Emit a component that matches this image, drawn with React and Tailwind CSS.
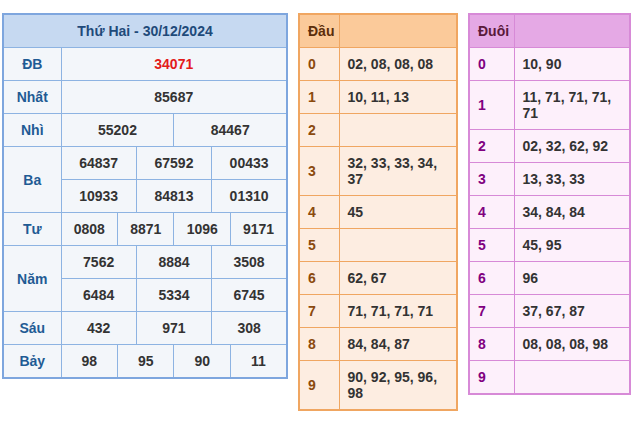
const FONT = "font-['Liberation_Sans',Arial,sans-serif]";

const BLUE_TD = "border border-[#8db3e2] bg-[#f3f6fa] py-2 leading-4 text-center text-[#333]";
const BLUE_LABEL = "border border-[#8db3e2] bg-[#f3f6fa] py-2 leading-4 text-center text-[#1f5b94]";

function Cells({ values, span }) {
  return values.map((v, i) => (
    <td key={i} colSpan={span} className={BLUE_TD}>
      {v}
    </td>
  ));
}

function ResultTable() {
  return (
    <table className="w-[286px] table-fixed border-collapse border-2 border-[#7ea6de] text-[14px] font-bold">
      <colgroup>
        <col className="w-[58px]" />
        {Array.from({ length: 12 }).map((_, i) => (
          <col key={i} />
        ))}
      </colgroup>
      <tbody>
        <tr>
          <th colSpan={13} className="border border-[#8db3e2] bg-[#c6d9f1] py-2 leading-4 text-center text-[#1f4a7a]">
            Thứ Hai - 30/12/2024
          </th>
        </tr>
        <tr>
          <td className={BLUE_LABEL}>ĐB</td>
          <td colSpan={12} className="border border-[#8db3e2] bg-[#f3f6fa] py-2 leading-4 text-center text-[#e31b1b]">
            34071
          </td>
        </tr>
        <tr>
          <td className={BLUE_LABEL}>Nhất</td>
          <Cells values={["85687"]} span={12} />
        </tr>
        <tr>
          <td className={BLUE_LABEL}>Nhì</td>
          <Cells values={["55202", "84467"]} span={6} />
        </tr>
        <tr>
          <td rowSpan={2} className={BLUE_LABEL}>Ba</td>
          <Cells values={["64837", "67592", "00433"]} span={4} />
        </tr>
        <tr>
          <Cells values={["10933", "84813", "01310"]} span={4} />
        </tr>
        <tr>
          <td className={BLUE_LABEL}>Tư</td>
          <Cells values={["0808", "8871", "1096", "9171"]} span={3} />
        </tr>
        <tr>
          <td rowSpan={2} className={BLUE_LABEL}>Năm</td>
          <Cells values={["7562", "8884", "3508"]} span={4} />
        </tr>
        <tr>
          <Cells values={["6484", "5334", "6745"]} span={4} />
        </tr>
        <tr>
          <td className={BLUE_LABEL}>Sáu</td>
          <Cells values={["432", "971", "308"]} span={4} />
        </tr>
        <tr>
          <td className={BLUE_LABEL}>Bảy</td>
          <Cells values={["98", "95", "90", "11"]} span={3} />
        </tr>
      </tbody>
    </table>
  );
}

const DAU = [
  "02, 08, 08, 08",
  "10, 11, 13",
  "",
  "32, 33, 33, 34, 37",
  "45",
  "",
  "62, 67",
  "71, 71, 71, 71",
  "84, 84, 87",
  "90, 92, 95, 96, 98",
];

const DUOI = [
  "10, 90",
  "11, 71, 71, 71, 71",
  "02, 32, 62, 92",
  "13, 33, 33",
  "34, 84, 84",
  "45, 95",
  "96",
  "37, 67, 87",
  "08, 08, 08, 98",
  "",
];

const THEMES = {
  orange: {
    table: "w-[160px] border-[#f0a661]",
    labelCol: "w-[40px]",
    cell: "border border-[#f0a661] bg-[#fdede1]",
    head: "border border-[#f0a661] bg-[#fbca9a] text-[#5c2e0b]",
    label: "text-[#8b4a0e]",
  },
  purple: {
    table: "w-[163px] border-[#d78ad7]",
    labelCol: "w-[45px]",
    cell: "border border-[#d78ad7] bg-[#fdf0fb]",
    head: "border border-[#d78ad7] bg-[#e5a9e5] text-[#5a1a3a]",
    label: "text-[#800080]",
  },
};

function LotoTable({ title, rows, theme }) {
  const t = THEMES[theme];
  return (
    <table className={`table-fixed border-collapse border-2 text-[14px] font-bold ${t.table}`}>
      <colgroup>
        <col className={t.labelCol} />
        <col />
      </colgroup>
      <tbody>
        <tr>
          <th className={`${t.head} px-2 py-2 text-left leading-4`}>{title}</th>
          <th className={`${t.head} px-2 py-2 leading-4`}></th>
        </tr>
        {rows.map((value, i) => (
          <tr key={i}>
            <td className={`${t.cell} ${t.label} px-2 py-2 leading-4`}>{i}</td>
            <td className={`${t.cell} px-2 py-2 leading-4 text-[#333]`}>{value || "\u00a0"}</td>
          </tr>
        ))}
      </tbody>
    </table>
  );
}

export default function App() {
  return (
    <div className={`${FONT} flex min-h-[423px] items-start gap-[10px] bg-white pl-[2px] pt-[13px]`}>
      <ResultTable />
      <LotoTable title="Đầu" rows={DAU} theme="orange" />
      <LotoTable title="Đuôi" rows={DUOI} theme="purple" />
    </div>
  );
}
